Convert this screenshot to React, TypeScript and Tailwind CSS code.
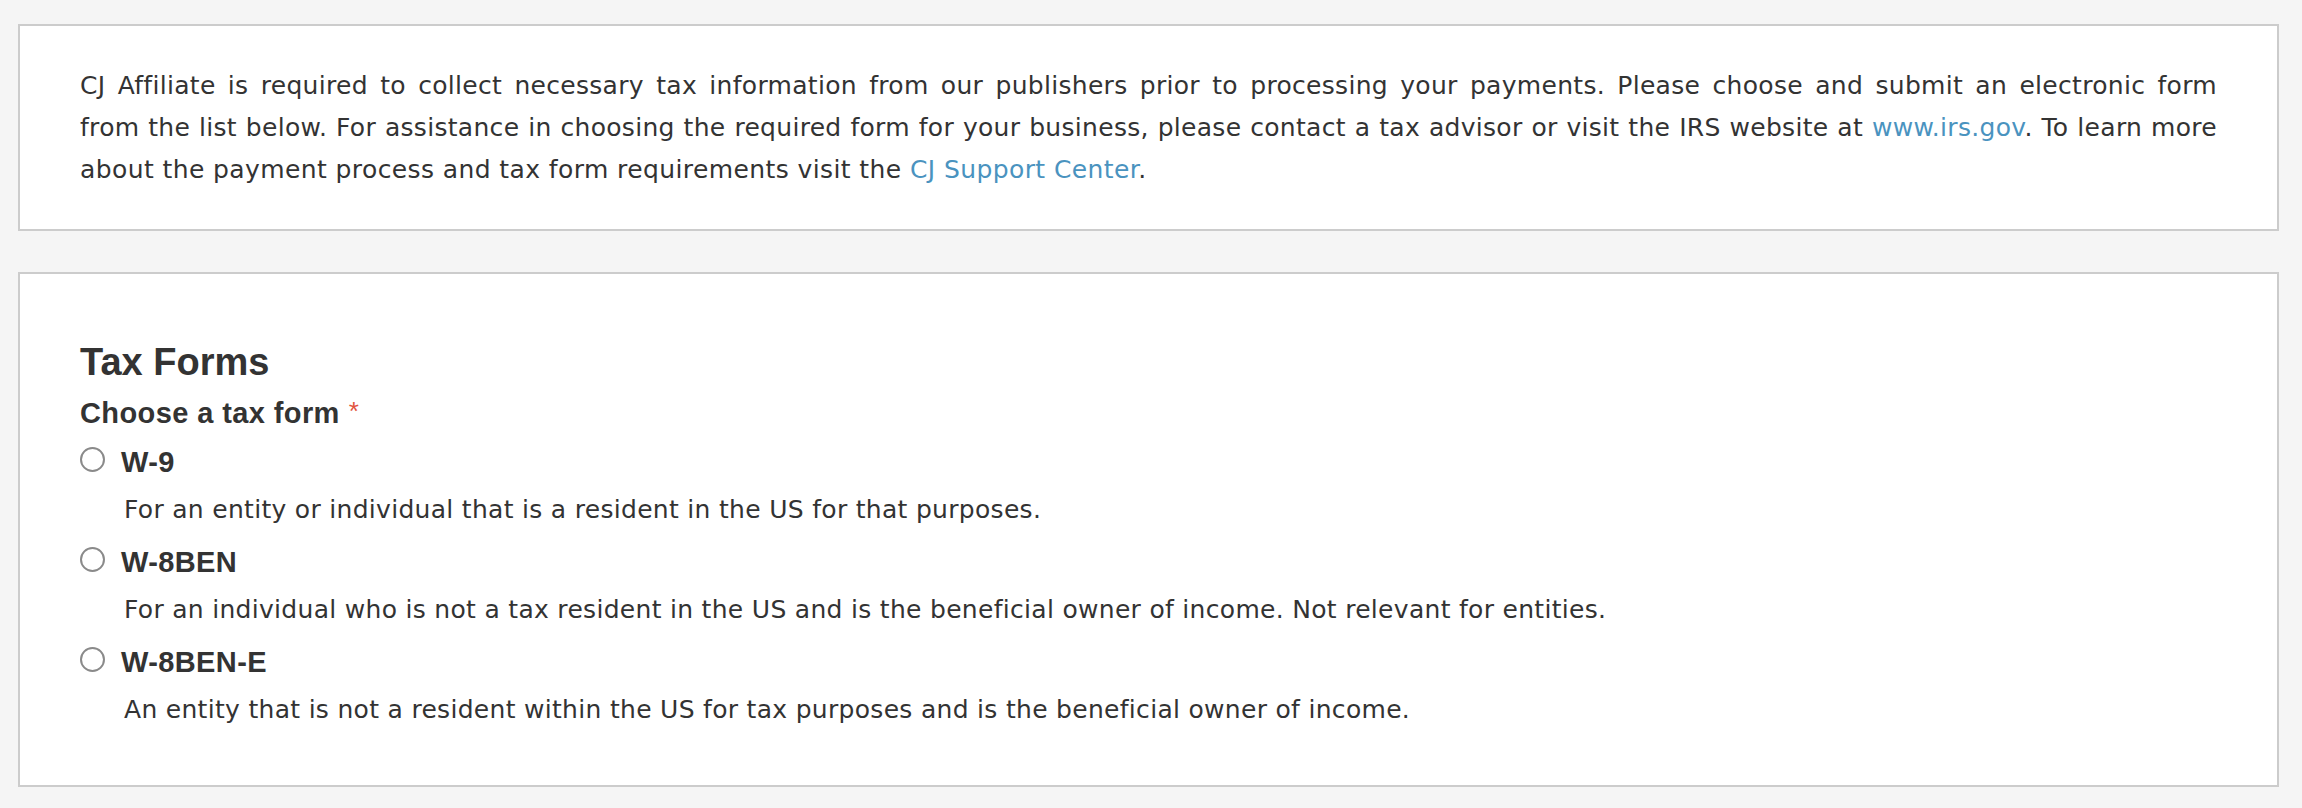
import { useState } from "react";

type TaxForm = {
  id: string;
  label: string;
  description: string;
};

const forms: TaxForm[] = [
  {
    id: "w9",
    label: "W-9",
    description:
      "For an entity or individual that is a resident in the US for that purposes.",
  },
  {
    id: "w8ben",
    label: "W-8BEN",
    description:
      "For an individual who is not a tax resident in the US and is the beneficial owner of income. Not relevant for entities.",
  },
  {
    id: "w8bene",
    label: "W-8BEN-E",
    description:
      "An entity that is not a resident within the US for tax purposes and is the beneficial owner of income.",
  },
];

const RadioOption = ({
  form,
  checked,
  onSelect,
}: {
  form: TaxForm;
  checked: boolean;
  onSelect: () => void;
}) => {
  return (
    <div className="flex flex-col">
      <label
        onClick={onSelect}
        className="flex h-[44px] items-start gap-4 cursor-pointer"
      >
        <span className="mt-[7px] flex size-[25px] shrink-0 items-center justify-center rounded-full border-2 border-[#8a8a8a] bg-white">
          {checked && <span className="size-[13px] rounded-full bg-[#333]" />}
        </span>
        <span className="font-['Liberation_Sans',Arial,sans-serif] text-[29px] leading-[44px] font-semibold tracking-[0.4px] text-[#333]">
          {form.label}
        </span>
      </label>
      <div className="mt-[5px] pl-[44px] text-[25px] leading-[42px] tracking-[0.3px] text-[#333]">
        {form.description}
      </div>
    </div>
  );
};

export default function App() {
  const [selected, setSelected] = useState<string | null>(null);

  return (
    <div className="min-h-screen bg-[#f5f5f5] pt-[24px] pl-[18px] pr-[23px] pb-6 font-['DejaVu_Sans',Verdana,sans-serif] text-[#333]">
      <div className="border-2 border-[#cccccc] bg-white px-[60px] pt-[39px] pb-[38px] text-[25px] leading-[42px]">
        {/* first two lines justified edge to edge, last line left */}
        <p className="text-justify [text-align-last:justify] tracking-[0.3px]">
          CJ Affiliate is required to collect necessary tax information from
          our publishers prior to processing your payments. Please choose and
          submit an electronic form
          <br />
          from the list below. For assistance in choosing the required form for
          your business, please contact a tax advisor or visit the IRS website
          at{" "}
          <a href="#" className="text-[#4a93bf]">
            www.irs.gov
          </a>
          . To learn more
        </p>
        <p className="tracking-[0.4px]">
          about the payment process and tax form requirements visit the{" "}
          <a href="#" className="text-[#4a93bf]">
            CJ Support Center
          </a>
          .
        </p>
      </div>

      <div className="mt-[41px] border-2 border-[#cccccc] bg-white px-[60px] pt-[66px] pb-[54px]">
        <h2 className="font-['Liberation_Sans',Arial,sans-serif] text-[38px] leading-[44px] font-semibold">
          Tax Forms
        </h2>
        <div className="mt-[9px] font-['Liberation_Sans',Arial,sans-serif] text-[29px] leading-[40px] font-semibold tracking-[0.4px]">
          Choose a tax form
          <span className="ml-[9px] align-top text-[26px] leading-[36px] font-normal text-[#e2553f]">
            *
          </span>
        </div>
        <div className="mt-[7px] flex flex-col gap-[9px]">
          {forms.map((form) => (
            <RadioOption
              key={form.id}
              form={form}
              checked={selected === form.id}
              onSelect={() => setSelected(form.id)}
            />
          ))}
        </div>
      </div>
    </div>
  );
}
